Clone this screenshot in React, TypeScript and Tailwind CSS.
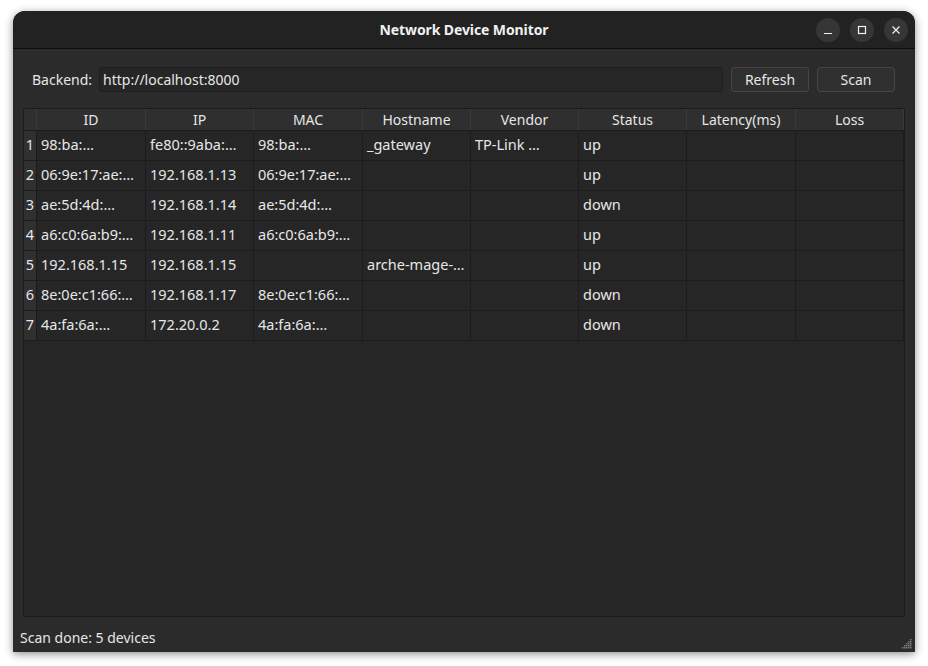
import React from 'react';

const columns = ['ID', 'IP', 'MAC', 'Hostname', 'Vendor', 'Status', 'Latency(ms)', 'Loss'];

const rows = [
  ['98:ba:…', 'fe80::9aba:…', '98:ba:…', '_gateway', 'TP-Link …', 'up', '', ''],
  ['06:9e:17:ae:…', '192.168.1.13', '06:9e:17:ae:…', '', '', 'up', '', ''],
  ['ae:5d:4d:…', '192.168.1.14', 'ae:5d:4d:…', '', '', 'down', '', ''],
  ['a6:c0:6a:b9:…', '192.168.1.11', 'a6:c0:6a:b9:…', '', '', 'up', '', ''],
  ['192.168.1.15', '192.168.1.15', '', 'arche-mage-…', '', 'up', '', ''],
  ['8e:0e:c1:66:…', '192.168.1.17', '8e:0e:c1:66:…', '', '', 'down', '', ''],
  ['4a:fa:6a:…', '172.20.0.2', '4a:fa:6a:…', '', '', 'down', '', ''],
];

const colWidths = ['w-[109px]', 'w-[108px]', 'w-[109px]', 'w-[108px]', 'w-[108px]', 'w-[108px]', 'w-[109px]', 'w-[108px]'];

function WindowButton({ children }: { children: React.ReactNode }) {
  return (
    <div className="w-6 h-6 rounded-full bg-[#363636] flex items-center justify-center text-[#f2f2f2]">
      {children}
    </div>
  );
}

export default function App() {
  return (
    <div
      className="w-[928px] h-[666px] bg-white pt-[11px] pl-[13px]"
      style={{ fontFamily: '"Noto Sans", "Open Sans", sans-serif' }}
    >
      <div className="w-[902px] h-[641px] rounded-t-[12px] bg-[#2b2b2b] flex flex-col shadow-[0_2px_8px_rgba(0,0,0,0.45)] overflow-hidden">
        {/* Title bar */}
        <div className="h-[38px] bg-[#222222] border-b border-[#0d0d0d] flex items-center relative shrink-0">
          <div className="flex-1 text-center text-[14px] font-bold text-[#f0f0f0] tracking-[-0.1px]">
            Network Device Monitor
          </div>
          <div className="absolute right-[7px] top-[7px] flex gap-[10px]">
            <WindowButton>
              <svg width="10" height="10" viewBox="0 0 10 10">
                <path d="M1 8.5h8" stroke="currentColor" strokeWidth="1.2" />
              </svg>
            </WindowButton>
            <WindowButton>
              <svg width="10" height="10" viewBox="0 0 10 10">
                <rect x="1.5" y="1.5" width="7" height="7" fill="none" stroke="currentColor" strokeWidth="1.2" />
              </svg>
            </WindowButton>
            <WindowButton>
              <svg width="10" height="10" viewBox="0 0 10 10">
                <path d="M1.5 1.5l7 7M8.5 1.5l-7 7" stroke="currentColor" strokeWidth="1.2" />
              </svg>
            </WindowButton>
          </div>
        </div>

        {/* Backend row */}
        <div className="flex items-center pl-[19px] pr-[20px] pt-[18px] text-[14px] text-[#e6e6e6]">
          <span className="mr-[7px]">Backend:</span>
          <div className="flex-1 h-[25px] bg-[#262626] border border-[#1e1e1e] rounded-[3px] flex items-center px-[3px]">
            http://localhost:8000
          </div>
          <button className="ml-[8px] w-[78px] h-[25px] bg-[#303030] border border-[#454545] rounded-[3px] text-[#e6e6e6]">
            Refresh
          </button>
          <button className="ml-[8px] w-[78px] h-[25px] bg-[#303030] border border-[#454545] rounded-[3px] text-[#e6e6e6]">
            Scan
          </button>
        </div>

        {/* Table */}
        <div className="mx-[10px] mt-[16px] h-[509px] bg-[#262626] border border-[#1c1c1c] text-[14.5px] text-[#e6e6e6] overflow-hidden">
          <div className="flex h-[22px] bg-[#2f2f2f] border-b border-[#1c1c1c] text-[14px]">
            <div className="w-[13px] border-r border-[#3a3a3a]" />
            {columns.map((c, i) => (
              <div
                key={c}
                className={`${colWidths[i]} border-r border-[#3a3a3a] flex items-center justify-center whitespace-nowrap`}
              >
                {c}
              </div>
            ))}
          </div>
          {rows.map((r, ri) => (
            <div key={ri} className="flex h-[30px]">
              <div className="w-[13px] bg-[#303030] border-r border-b border-[#1c1c1c] flex items-center justify-center text-[#e6e6e6] pb-[1px]">
                {ri + 1}
              </div>
              {r.map((v, ci) => (
                <div
                  key={ci}
                  className={`${colWidths[ci]} border-r border-b border-[#1c1c1c] flex items-center px-[4px] pb-[2px] whitespace-nowrap overflow-hidden`}
                >
                  {v}
                </div>
              ))}
            </div>
          ))}
        </div>

        {/* Status bar */}
        <div className="flex-1 flex items-center pl-[7px] pt-[5px] text-[14px] text-[#e6e6e6] relative">
          Scan done: 5 devices
          <svg className="absolute right-[3px] bottom-[3px]" width="11" height="11" viewBox="0 0 11 11">
            {[
              [8, 0], [6, 2], [8, 2], [4, 4], [6, 4], [8, 4], [2, 6], [4, 6], [6, 6], [8, 6], [0, 8], [2, 8], [4, 8], [6, 8], [8, 8],
            ].map(([x, y], i) => (
              <rect key={i} x={x + 1} y={y + 1} width="1.5" height="1.5" fill="#7a7a7a" />
            ))}
          </svg>
        </div>
      </div>
    </div>
  );
}
